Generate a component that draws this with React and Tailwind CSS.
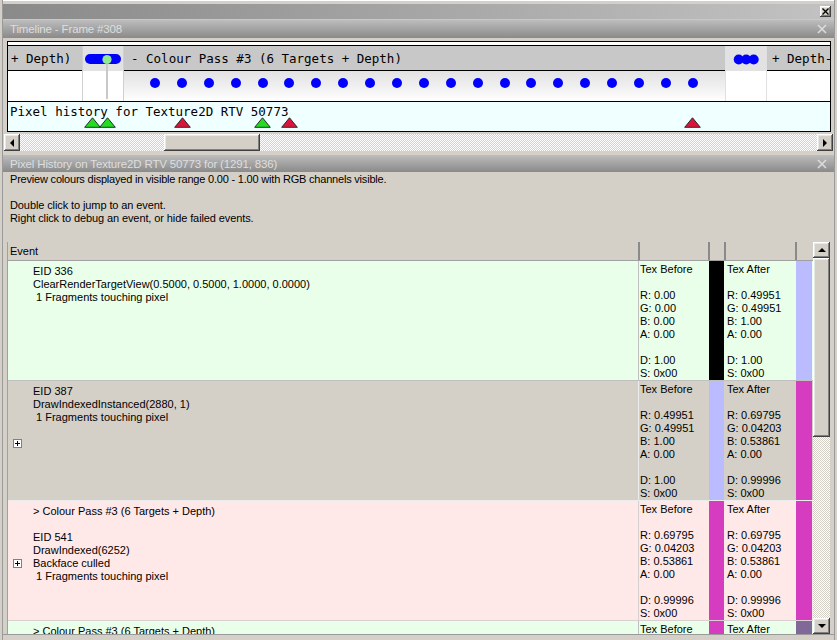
import React from "react";

const btn3d =
  "bg-[#d4d0c8] shadow-[inset_-1px_-1px_0_#404040,inset_1px_1px_0_#ffffff,inset_-2px_-2px_0_#808080,inset_2px_2px_0_#e8e8e8]";
const track =
  "bg-[image:repeating-conic-gradient(#d4d0c8_0_25%,#ffffff_0_50%)] bg-[length:2px_2px]";
const mono = "font-['DejaVu_Sans_Mono',monospace] text-[12.5px]";

function Arrow({ dir }) {
  const pts = {
    left: "4,0 0,4 4,8",
    right: "0,0 4,4 0,8",
    up: "0,4 4,0 8,4",
    down: "0,0 8,0 4,4",
  }[dir];
  const horiz = dir === "left" || dir === "right";
  return (
    <svg width={horiz ? 4 : 8} height={horiz ? 8 : 4} viewBox={horiz ? "0 0 4 8" : "0 0 8 4"}>
      <polygon points={pts} fill="#000" />
    </svg>
  );
}

function TitleX() {
  return (
    <svg width="10" height="10" viewBox="0 0 10 10" className="mr-[7px]">
      <path d="M1 1 L9 9 M9 1 L1 9" stroke="#dcdcdc" strokeWidth="1.6" />
    </svg>
  );
}

function TitleBar({ text, h }) {
  return (
    <div
      className={`${h} flex items-center justify-between bg-gradient-to-b from-[#bdbdbd] to-[#8a8a8a] pl-[7px] text-[#dedede] text-[11.5px] tracking-[-0.15px] leading-[14px] whitespace-nowrap`}
    >
      <span>{text}</span>
      <TitleX />
    </div>
  );
}

function Triangle({ color, cls }) {
  return (
    <svg width="17" height="11" viewBox="0 0 17 11" className={`absolute top-[15px] ${cls}`}>
      <polygon points="0.7,10.3 8.5,0.8 16.3,10.3" fill={color} stroke="#2a2a2a" strokeWidth="1" />
    </svg>
  );
}

function Plus() {
  return (
    <div className="w-[9px] h-[9px] border border-[#808080] bg-white flex items-center justify-center">
      <svg width="5" height="5" viewBox="0 0 5 5">
        <path d="M0 2.5 H5 M2.5 0 V5" stroke="#000" strokeWidth="1" />
      </svg>
    </div>
  );
}

const rows = [
  {
    bg: "bg-[#eaffea]",
    sep: "border-[#c0c0c0]",
    plus: false,
    lines: ["EID 336", "ClearRenderTargetView(0.5000, 0.5000, 1.0000, 0.0000)", "\u00a01 Fragments touching pixel"],
    before: ["0.00", "0.00", "0.00", "0.00", "1.00", "0x00"],
    after: ["0.49951", "0.49951", "1.00", "0.00", "1.00", "0x00"],
    sb: "bg-[#000000]",
    sa: "bg-[#bbbbff]",
  },
  {
    bg: "bg-[#d4d0c8]",
    sep: "border-[#ececec]",
    plus: true,
    lines: ["EID 387", "DrawIndexedInstanced(2880, 1)", "\u00a01 Fragments touching pixel"],
    before: ["0.49951", "0.49951", "1.00", "0.00", "1.00", "0x00"],
    after: ["0.69795", "0.04203", "0.53861", "0.00", "0.99996", "0x00"],
    sb: "bg-[#bbbbff]",
    sa: "bg-[#d63cc0]",
  },
  {
    bg: "bg-[#ffe8e8]",
    sep: "border-[#d8d0d0]",
    plus: true,
    lines: ["> Colour Pass #3 (6 Targets + Depth)", "", "EID 541", "DrawIndexed(6252)", "Backface culled", "\u00a01 Fragments touching pixel"],
    before: ["0.69795", "0.04203", "0.53861", "0.00", "0.99996", "0x00"],
    after: ["0.69795", "0.04203", "0.53861", "0.00", "0.99996", "0x00"],
    sb: "bg-[#d63cc0]",
    sa: "bg-[#d63cc0]",
  },
  {
    bg: "bg-[#eaffea]",
    sep: "border-[#c0c0c0]",
    plus: true,
    lines: ["> Colour Pass #3 (6 Targets + Depth)", "", "EID 552", "DrawIndexed(1446)", "\u00a01 Fragments touching pixel"],
    before: ["0.69795", "0.04203", "0.53861", "0.00", "0.99996", "0x00"],
    after: ["0.62180", "0.05013", "0.51766", "0.00", "0.99996", "0x00"],
    sb: "bg-[#d63cc0]",
    sa: "bg-[#806898]",
  },
];

function TexCell({ title, vals, cls }) {
  const labels = ["R", "G", "B", "A", "D", "S"];
  return (
    <div className={cls}>
      <div>{title}</div>
      <div className="h-[13px]" />
      {labels.slice(0, 4).map((l, i) => (
        <div key={l}>
          {l}: {vals[i]}
        </div>
      ))}
      <div className="h-[13px]" />
      {labels.slice(4).map((l, i) => (
        <div key={l}>
          {l}: {vals[i + 4]}
        </div>
      ))}
    </div>
  );
}

const triangles = [
  { c: "#22dd22", cls: "left-[76px]" },
  { c: "#22dd22", cls: "left-[91px]" },
  { c: "#dc143c", cls: "left-[166px]" },
  { c: "#22dd22", cls: "left-[246px]" },
  { c: "#dc143c", cls: "left-[273px]" },
  { c: "#dc143c", cls: "left-[676px]" },
];

export default function App() {
  const dots = Array.from({ length: 21 });
  return (
    <div className="w-[837px] h-[640px] bg-[#d4d0c8] overflow-hidden font-['Liberation_Sans',Arial,sans-serif] text-[11px] leading-[13px] text-black">
      <div className="ml-[2px] w-[833px] h-[640px] border-x border-[#9a9a9a] flex flex-col">
        {/* top strip */}
        <div className="h-[4px] shrink-0 border-t border-white" />
        {/* outer bar */}
        <div className="h-[15px] shrink-0 bg-gradient-to-r from-[#8a8a8a] to-[#c2c2c2] flex items-center justify-end pr-[3px]">
          <div className={`w-[11px] h-[11px] ${btn3d} flex items-center justify-center`}>
            <svg width="7" height="7" viewBox="0 0 7 7">
              <path d="M0.5 0.5 L6.5 6.5 M6.5 0.5 L0.5 6.5" stroke="#000" strokeWidth="1.3" />
            </svg>
          </div>
        </div>
        <div className="h-[1px] shrink-0 bg-[#c8c8c8]" />
        <TitleBar text="Timeline - Frame #308" h="h-[18px] shrink-0" />
        <div className="h-[3px] shrink-0" />

        {/* timeline box */}
        <div className="ml-[4px] w-[824px] shrink-0 border border-black flex flex-col">
          <div className="h-[4px] bg-white border-b border-black" />
          <div className="flex h-[55px]">
            <div className="w-[74px] flex flex-col">
              <div className={`h-[25px] bg-[#c8c8c8] border-b border-black pl-[3px] flex items-center whitespace-nowrap ${mono}`}>
                + Depth)
              </div>
              <div className="flex-1 bg-white" />
            </div>
            <div className="w-[42px]">
              <svg width="42" height="55" viewBox="0 0 42 55">
                <rect x="0" y="0" width="42" height="25" fill="#e2e2e2" />
                <rect x="0" y="25" width="42" height="30" fill="#ffffff" />
                <line x1="0.5" y1="0" x2="0.5" y2="55" stroke="#d0d0d0" />
                <line x1="41.5" y1="0" x2="41.5" y2="55" stroke="#d0d0d0" />
                <line x1="25" y1="17" x2="25" y2="53" stroke="#c8c8c8" strokeWidth="2" />
                <rect x="3" y="8" width="36" height="10" rx="5" fill="#0000ff" />
                <circle cx="25" cy="13.5" r="4.6" fill="#90e890" />
              </svg>
            </div>
            <div className="w-[601px] flex flex-col">
              <div className={`h-[25px] bg-[#c8c8c8] border-b border-black pl-[7px] flex items-center whitespace-nowrap ${mono}`}>
                - Colour Pass #3 (6 Targets + Depth)
              </div>
              <div className="flex-1 bg-gradient-to-b from-[#e2e2e2] via-[#efefef] to-white flex items-start pl-[26px] pt-[7px] gap-[16.9px]">
                {dots.map((_, i) => (
                  <div key={i} className="w-[10px] h-[10px] shrink-0 rounded-full bg-[#0000ff]" />
                ))}
              </div>
            </div>
            <div className="w-[42px]">
              <svg width="42" height="55" viewBox="0 0 42 55">
                <rect x="0" y="0" width="42" height="25" fill="#e2e2e2" />
                <rect x="0" y="25" width="42" height="30" fill="#ffffff" />
                <line x1="0.5" y1="0" x2="0.5" y2="55" stroke="#e0e0e0" />
                <line x1="41.5" y1="0" x2="41.5" y2="55" stroke="#e0e0e0" />
                <circle cx="13.7" cy="13.5" r="5" fill="#0000ff" />
                <circle cx="21.2" cy="13.5" r="5" fill="#0000ff" />
                <circle cx="28.7" cy="13.5" r="5" fill="#0000ff" />
              </svg>
            </div>
            <div className="flex-1 flex flex-col overflow-hidden">
              <div className={`h-[25px] bg-[#c8c8c8] border-b border-black pl-[5px] flex items-center whitespace-nowrap ${mono}`}>
                + Depth-
              </div>
              <div className="flex-1 bg-white" />
            </div>
          </div>
          <div className={`relative h-[30px] border-t border-black bg-[#f0ffff] pl-[2px] pt-[2px] leading-[16px] ${mono}`}>
            Pixel history for Texture2D RTV 50773
            {triangles.map((t, i) => (
              <Triangle key={i} color={t.c} cls={t.cls} />
            ))}
          </div>
        </div>

        <div className="h-[2px] shrink-0" />
        {/* horizontal scrollbar */}
        <div className={`ml-[1px] w-[829px] h-[17px] shrink-0 flex ${track}`}>
          <div className={`w-[16px] h-[17px] ${btn3d} flex items-center justify-center`}>
            <Arrow dir="left" />
          </div>
          <div className="w-[144px]" />
          <div className={`w-[96px] h-[17px] ${btn3d}`} />
          <div className="flex-1" />
          <div className={`w-[16px] h-[17px] ${btn3d} flex items-center justify-center`}>
            <Arrow dir="right" />
          </div>
        </div>
        <div className="h-[4px] shrink-0" />

        <TitleBar text="Pixel History on Texture2D RTV 50773 for (1291, 836)" h="h-[17px] shrink-0" />

        <div className="pl-[7px] mt-[1px] shrink-0 whitespace-nowrap">
          <div className="tracking-[-0.2px]">Preview colours displayed in visible range 0.00 - 1.00 with RGB channels visible.</div>
          <div className="h-[13px]" />
          <div className="tracking-[-0.1px]">Double click to jump to an event.</div>
          <div className="tracking-[-0.1px]">Right click to debug an event, or hide failed events.</div>
        </div>

        {/* table */}
        <div className="ml-[4px] mt-[17px] h-[392px] shrink-0 flex">
          <div className="w-[806px] border-l border-[#a0a0a0] flex flex-col overflow-hidden">
            <div className="h-[19px] shrink-0 flex border-b border-[#a0a0a0]">
              <div className="w-[630px] pl-[2px] flex items-center">Event</div>
              <div className="w-[70px] border-l-2 border-[#8a8a8a]" />
              <div className="w-[16px] border-l-2 border-[#8a8a8a]" />
              <div className="w-[71px] border-l-2 border-[#8a8a8a]" />
              <div className="flex-1 border-l-2 border-[#8a8a8a]" />
            </div>
            {rows.map((r, i) => (
              <div key={i} className={`h-[120px] shrink-0 flex border-b ${r.sep} ${r.bg}`}>
                <div className={`w-[631px] shrink-0 border-r ${r.sep} flex`}>
                  <div className="w-[25px] shrink-0 flex items-center pl-[5px] pt-[5px]">
                    {r.plus && <Plus />}
                  </div>
                  <div className="pt-[4px] whitespace-nowrap">
                    {r.lines.map((l, j) => (
                      <div key={j} className="h-[13px]">
                        {l}
                      </div>
                    ))}
                  </div>
                </div>
                <TexCell title="Tex Before" vals={r.before} cls="w-[70px] shrink-0 pl-[1px] pt-[2px] whitespace-nowrap" />
                <div className={`w-[15px] shrink-0 ${r.sb}`} />
                <TexCell title="Tex After" vals={r.after} cls="w-[72px] shrink-0 pl-[3px] pt-[2px] whitespace-nowrap" />
                <div className={`w-[16px] shrink-0 ${r.sa}`} />
              </div>
            ))}
          </div>
          {/* vertical scrollbar */}
          <div className={`w-[17px] flex flex-col ${track}`}>
            <div className={`h-[16px] shrink-0 ${btn3d} flex items-center justify-center`}>
              <Arrow dir="up" />
            </div>
            <div className={`h-[179px] shrink-0 ${btn3d}`} />
            <div className="flex-1" />
            <div className={`h-[16px] shrink-0 ${btn3d} flex items-center justify-center`}>
              <Arrow dir="down" />
            </div>
          </div>
        </div>
        <div className="flex-1 border-t border-[#9a9a9a]" />
      </div>
    </div>
  );
}
